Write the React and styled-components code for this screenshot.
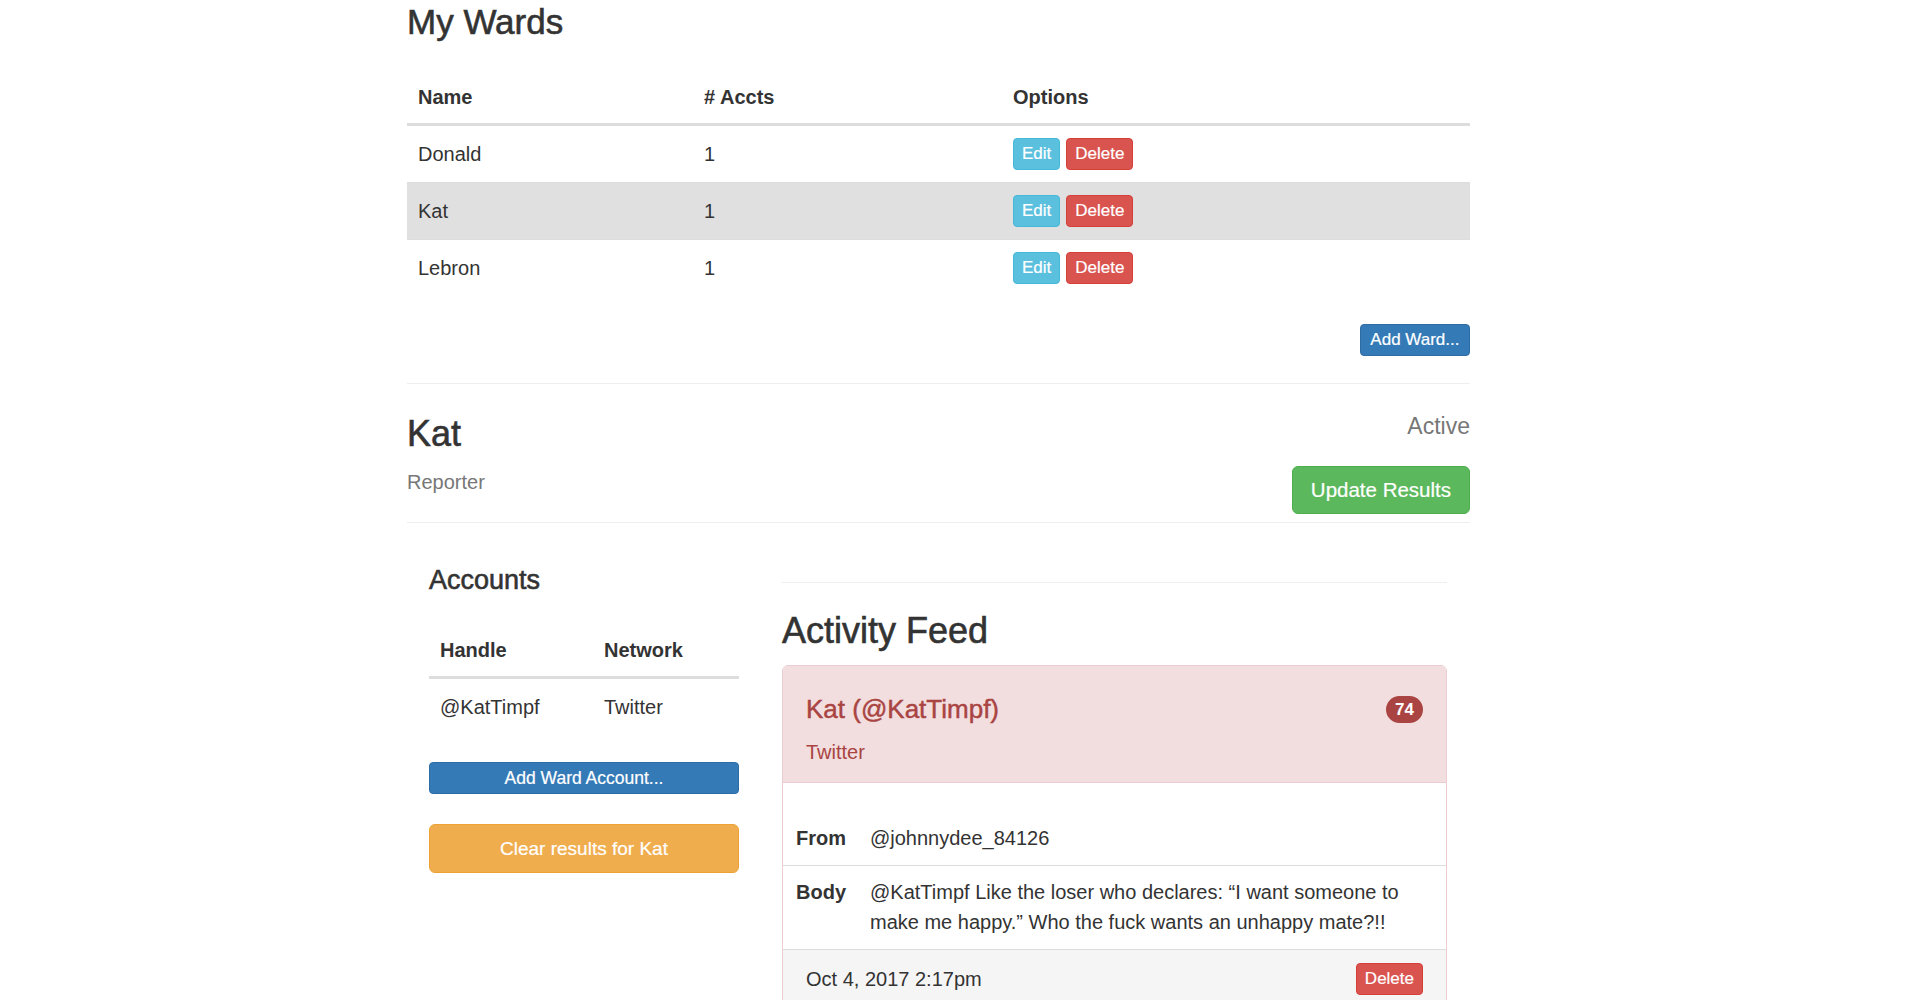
import React from 'react';
import styled, { createGlobalStyle } from 'styled-components';

const GlobalStyle = createGlobalStyle`
  *, *::before, *::after {
    box-sizing: border-box;
  }
  html, body {
    margin: 0;
    padding: 0;
    background: #fff;
  }
  body {
    font-family: "Liberation Sans", Arial, Helvetica, sans-serif;
    font-size: 20px;
    color: #333;
  }
`;

const variants = {
  info: { bg: '#5bc0de', border: '#46b8da' },
  danger: { bg: '#d9534f', border: '#d43f3a' },
  primary: { bg: '#337ab7', border: '#2e6da4' },
  success: { bg: '#5cb85c', border: '#4cae4c' },
  warning: { bg: '#f0ad4e', border: '#eea236' },
};

const sizes = {
  xs: { height: 32, font: 17, pad: '0 8px', radius: 4 },
  sm: { height: 32, font: 17.5, pad: '0 10px', radius: 4 },
  md: { height: 49, font: 19, pad: '0 16px', radius: 6 },
  lg: { height: 48, font: 20.5, pad: '0 18px', radius: 6 },
};

const Page = styled.div`
  width: 1063px;
  margin-left: 407px;
  padding-top: 3px;
  padding-bottom: 40px;
`;

const Heading = styled.h2`
  margin: 0;
  font-size: ${p => p.$size}px;
  line-height: 1.1;
  font-weight: 400;
  color: #333;
  -webkit-text-stroke: 0.6px currentColor;
`;

const Button = styled.button`
  display: ${p => (p.$block ? 'flex' : 'inline-flex')};
  width: ${p => (p.$block ? '100%' : 'auto')};
  align-items: center;
  justify-content: center;
  height: ${p => sizes[p.$size].height}px;
  padding: ${p => p.$pad || sizes[p.$size].pad};
  font-family: inherit;
  font-size: ${p => sizes[p.$size].font}px;
  color: #fff;
  white-space: nowrap;
  background: ${p => variants[p.$variant].bg};
  border: 1px solid ${p => variants[p.$variant].border};
  border-radius: ${p => sizes[p.$size].radius}px;
  -webkit-text-stroke: 0.2px currentColor;
  cursor: pointer;
`;

const DataTable = styled.table`
  width: 100%;
  border-collapse: separate;
  border-spacing: 0;
  margin-top: ${p => p.$top}px;
  font-size: 20px;

  tbody tr:first-child td {
    border-top: none;
  }
`;

const Th = styled.th`
  width: ${p => (p.$w ? `${p.$w}px` : 'auto')};
  text-align: left;
  font-weight: 700;
  line-height: 32px;
  padding: 12px 12px 10px 11px;
  border-bottom: 3px solid #ddd;
  vertical-align: bottom;
`;

const Row = styled.tr`
  background: ${p => (p.$active ? '#e0e0e0' : 'transparent')};
`;

const Td = styled.td`
  line-height: 32px;
  padding: 12px 12px 12px 11px;
  border-top: 1px solid #ddd;
  vertical-align: middle;
`;

const Actions = styled.div`
  display: flex;
  gap: 6px;
`;

const RightBar = styled.div`
  display: flex;
  justify-content: flex-end;
  margin-top: 28px;
`;

const Rule = styled.div`
  height: 1px;
  background: #eee;
  margin-top: ${p => p.$top}px;
`;

const WardHeader = styled.div`
  display: flex;
  justify-content: space-between;
  align-items: flex-start;
  margin-top: 30px;
`;

const WardInfo = styled.div`
  display: flex;
  flex-direction: column;
`;

const Role = styled.div`
  margin-top: 15px;
  font-size: 20px;
  line-height: 28px;
  color: #777;
`;

const WardStatus = styled.div`
  display: flex;
  flex-direction: column;
  align-items: flex-end;
  gap: 27px;
`;

const Status = styled.div`
  font-size: 23px;
  line-height: 1.1;
  color: #777;
`;

const Columns = styled.div`
  display: grid;
  grid-template-columns: 310px 665px;
  column-gap: 43px;
  padding-left: 22px;
  margin-top: 43px;
  align-items: start;
`;

const AccountsCol = styled.div`
  display: flex;
  flex-direction: column;
`;

const AccountActions = styled.div`
  display: flex;
  flex-direction: column;
  gap: 30px;
  margin-top: 27px;
`;

const FeedCol = styled.div`
  display: flex;
  flex-direction: column;
`;

const FeedTitle = styled.div`
  margin-top: 28px;
`;

const Panel = styled.div`
  margin-top: 15px;
  border: 1px solid #ebccd1;
  border-radius: 6px;
  overflow: hidden;
  background: #fff;
`;

const PanelHeading = styled.div`
  background: #f2dede;
  color: #a94442;
  padding: 29px 23px 16px;
  border-bottom: 1px solid #ebccd1;
`;

const PanelTitleRow = styled.div`
  display: flex;
  justify-content: space-between;
  align-items: center;
`;

const PanelTitle = styled.div`
  font-size: 26px;
  line-height: 1.1;
  -webkit-text-stroke: 0.45px currentColor;
`;

const Badge = styled.span`
  display: inline-flex;
  align-items: center;
  height: 27px;
  padding: 0 9px;
  border-radius: 14px;
  background: #a94442;
  color: #fff;
  font-size: 17px;
  font-weight: 700;
`;

const PanelSub = styled.div`
  margin-top: 14px;
  font-size: 20px;
  line-height: 28px;
`;

const PostTable = styled.table`
  width: 100%;
  border-collapse: separate;
  border-spacing: 0;
  margin-top: 29px;
  font-size: 20px;

  tr:first-child td {
    border-top: none;
  }
`;

const PostCell = styled.td`
  line-height: 29.4px;
  padding: 12px 12px 12px ${p => (p.$label ? 13 : 12)}px;
  border-top: 1px solid #ddd;
  vertical-align: top;
  font-weight: ${p => (p.$label ? 700 : 400)};
  width: ${p => (p.$label ? '1%' : 'auto')};
  white-space: ${p => (p.$label ? 'nowrap' : 'normal')};
`;

const PanelFooter = styled.div`
  display: flex;
  justify-content: space-between;
  align-items: center;
  padding: 13px 23px 15px;
  background: #f5f5f5;
  border-top: 1px solid #ddd;
  line-height: 29.4px;
`;

const wards = [
  { name: 'Donald', accts: 1 },
  { name: 'Kat', accts: 1, active: true },
  { name: 'Lebron', accts: 1 },
];

export default function App() {
  return (
    <>
      <GlobalStyle />
      <Page>
        <Heading $size={35}>My Wards</Heading>

        <DataTable $top={27}>
          <thead>
            <tr>
              <Th $w={286}>Name</Th>
              <Th $w={309}># Accts</Th>
              <Th>Options</Th>
            </tr>
          </thead>
          <tbody>
            {wards.map(w => (
              <Row key={w.name} $active={w.active}>
                <Td>{w.name}</Td>
                <Td>{w.accts}</Td>
                <Td>
                  <Actions>
                    <Button $variant="info" $size="xs">Edit</Button>
                    <Button $variant="danger" $size="xs">Delete</Button>
                  </Actions>
                </Td>
              </Row>
            ))}
          </tbody>
        </DataTable>

        <RightBar>
          <Button $variant="primary" $size="xs" $pad="0 9.5px">Add Ward...</Button>
        </RightBar>

        <Rule $top={27} />

        <WardHeader>
          <WardInfo>
            <Heading $size={36}>Kat</Heading>
            <Role>Reporter</Role>
          </WardInfo>
          <WardStatus>
            <Status>Active</Status>
            <Button $variant="success" $size="lg">Update Results</Button>
          </WardStatus>
        </WardHeader>

        <Rule $top={8} />

        <Columns>
          <AccountsCol>
            <Heading $size={27}>Accounts</Heading>
            <DataTable $top={27}>
              <thead>
                <tr>
                  <Th $w={164}>Handle</Th>
                  <Th>Network</Th>
                </tr>
              </thead>
              <tbody>
                <tr>
                  <Td>@KatTimpf</Td>
                  <Td>Twitter</Td>
                </tr>
              </tbody>
            </DataTable>
            <AccountActions>
              <Button $variant="primary" $size="sm" $block>Add Ward Account...</Button>
              <Button $variant="warning" $size="md" $block>Clear results for Kat</Button>
            </AccountActions>
          </AccountsCol>

          <FeedCol>
            <Rule $top={16} />
            <FeedTitle>
              <Heading $size={36}>Activity Feed</Heading>
            </FeedTitle>
            <Panel>
              <PanelHeading>
                <PanelTitleRow>
                  <PanelTitle>Kat (@KatTimpf)</PanelTitle>
                  <Badge>74</Badge>
                </PanelTitleRow>
                <PanelSub>Twitter</PanelSub>
              </PanelHeading>
              <PostTable>
                <tbody>
                  <tr>
                    <PostCell $label>From</PostCell>
                    <PostCell>@johnnydee_84126</PostCell>
                  </tr>
                  <tr>
                    <PostCell $label>Body</PostCell>
                    <PostCell>
                      @KatTimpf Like the loser who declares: “I want someone to make me happy.” Who the fuck wants an unhappy mate?!!
                    </PostCell>
                  </tr>
                </tbody>
              </PostTable>
              <PanelFooter>
                <span>Oct 4, 2017 2:17pm</span>
                <Button $variant="danger" $size="xs">Delete</Button>
              </PanelFooter>
            </Panel>
          </FeedCol>
        </Columns>
      </Page>
    </>
  );
}
